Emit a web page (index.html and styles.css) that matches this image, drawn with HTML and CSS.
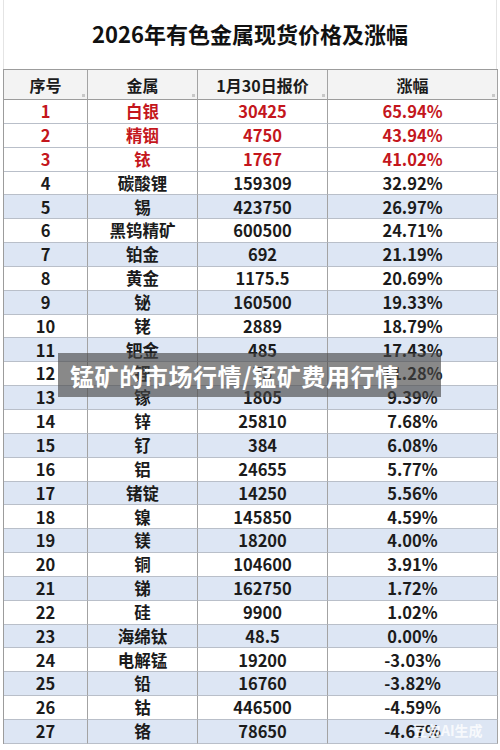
FILE: index.html
```html
<!DOCTYPE html>
<html lang="zh-CN">
<head>
<meta charset="utf-8">
<title>2026年有色金属现货价格及涨幅</title>
<link rel="stylesheet" href="styles.css">
</head>
<body>
<div class="page">
  <h1 class="title">2026年有色金属现货价格及涨幅</h1>
  <div class="sheet">
    <div class="row head"><div class="c">序号</div><div class="c">金属</div><div class="c">1月30日报价</div><div class="c">涨幅</div></div>
    <div class="row red"><div class="c">1</div><div class="c">白银</div><div class="c">30425</div><div class="c">65.94%</div></div>
    <div class="row red"><div class="c">2</div><div class="c">精铟</div><div class="c">4750</div><div class="c">43.94%</div></div>
    <div class="row red"><div class="c">3</div><div class="c">铱</div><div class="c">1767</div><div class="c">41.02%</div></div>
    <div class="row"><div class="c">4</div><div class="c">碳酸锂</div><div class="c">159309</div><div class="c">32.92%</div></div>
    <div class="row alt"><div class="c">5</div><div class="c">锡</div><div class="c">423750</div><div class="c">26.97%</div></div>
    <div class="row"><div class="c">6</div><div class="c">黑钨精矿</div><div class="c">600500</div><div class="c">24.71%</div></div>
    <div class="row alt"><div class="c">7</div><div class="c">铂金</div><div class="c">692</div><div class="c">21.19%</div></div>
    <div class="row"><div class="c">8</div><div class="c">黄金</div><div class="c">1175.5</div><div class="c">20.69%</div></div>
    <div class="row alt"><div class="c">9</div><div class="c">铋</div><div class="c">160500</div><div class="c">19.33%</div></div>
    <div class="row"><div class="c">10</div><div class="c">铑</div><div class="c">2889</div><div class="c">18.79%</div></div>
    <div class="row alt"><div class="c">11</div><div class="c">钯金</div><div class="c">485</div><div class="c">17.43%</div></div>
    <div class="row"><div class="c">12</div><div class="c">锂</div><div class="c">75</div><div class="c">11.28%</div></div>
    <div class="row alt"><div class="c">13</div><div class="c">镓</div><div class="c">1805</div><div class="c">9.39%</div></div>
    <div class="row"><div class="c">14</div><div class="c">锌</div><div class="c">25810</div><div class="c">7.68%</div></div>
    <div class="row alt"><div class="c">15</div><div class="c">钌</div><div class="c">384</div><div class="c">6.08%</div></div>
    <div class="row"><div class="c">16</div><div class="c">铝</div><div class="c">24655</div><div class="c">5.77%</div></div>
    <div class="row alt"><div class="c">17</div><div class="c">锗锭</div><div class="c">14250</div><div class="c">5.56%</div></div>
    <div class="row"><div class="c">18</div><div class="c">镍</div><div class="c">145850</div><div class="c">4.59%</div></div>
    <div class="row alt"><div class="c">19</div><div class="c">镁</div><div class="c">18200</div><div class="c">4.00%</div></div>
    <div class="row"><div class="c">20</div><div class="c">铜</div><div class="c">104600</div><div class="c">3.91%</div></div>
    <div class="row alt"><div class="c">21</div><div class="c">锑</div><div class="c">162750</div><div class="c">1.72%</div></div>
    <div class="row"><div class="c">22</div><div class="c">硅</div><div class="c">9900</div><div class="c">1.02%</div></div>
    <div class="row alt"><div class="c">23</div><div class="c">海绵钛</div><div class="c">48.5</div><div class="c">0.00%</div></div>
    <div class="row"><div class="c">24</div><div class="c">电解锰</div><div class="c">19200</div><div class="c">-3.03%</div></div>
    <div class="row alt"><div class="c">25</div><div class="c">铅</div><div class="c">16760</div><div class="c">-3.82%</div></div>
    <div class="row"><div class="c">26</div><div class="c">钴</div><div class="c">446500</div><div class="c">-4.59%</div></div>
    <div class="row alt"><div class="c">27</div><div class="c">铬</div><div class="c">78650</div><div class="c">-4.67%</div></div>
  </div>
  <div class="caption">锰矿的市场行情/锰矿费用行情</div>
  <div class="watermark">豆包AI生成</div>
</div>
</body>
</html>
```
FILE: styles.css
```css
html, body {
  margin: 0;
  padding: 0;
  background: #ffffff;
}
.page {
  position: relative;
  width: 500px;
  height: 750px;
  overflow: hidden;
  font-family: "Noto Sans CJK SC", "Noto Sans", sans-serif;
  color: #1b1b1b;
  background: #ffffff;
}
.title {
  margin: 0;
  height: 69px;
  display: flex;
  align-items: center;
  justify-content: center;
  font-size: 22px;
  font-weight: 700;
  color: #111;
  padding-bottom: 4px;
  box-sizing: border-box;
  border-left: 1px solid #e4e4e4;
  border-right: 1px solid #e4e4e4;
  margin-left: 3px;
  width: 494px;
}
.sheet {
  margin-left: 3px;
  width: 495px;
  border-top: 1px solid #9c9c9c;
  border-left: 1px solid #9c9c9c;
  box-sizing: border-box;
}
.row {
  display: grid;
  grid-template-columns: 84px 110px 130px 170px;
  height: 23.85px;
  background: #ffffff;
}
.row.alt {
  background: #dde6f4;
}
.row.head {
  height: 30px;
  background: #f3f3f3;
}
.c {
  position: relative;
  display: flex;
  align-items: center;
  justify-content: center;
  border-right: 1px solid #a3a3a3;
  border-bottom: 1px solid #b9bfc9;
  box-sizing: border-box;
  font-size: 16.5px;
  font-weight: 700;
  line-height: 1;
}
.head .c {
  font-size: 16px;
  font-weight: 700;
  border-bottom-color: #9c9c9c;
}
.head .c::after {
  content: "";
  position: absolute;
  right: 2px;
  bottom: 2px;
  width: 3px;
  height: 3px;
  background: #c8c8c8;
}
.red .c {
  color: #c4161c;
}
.caption {
  position: absolute;
  left: 58px;
  top: 353px;
  width: 383px;
  height: 44px;
  box-sizing: border-box;
  padding-left: 12px;
  display: flex;
  align-items: center;
  background: rgba(70, 70, 70, 0.64);
  color: #ffffff;
  font-size: 24px;
  font-weight: 700;
  letter-spacing: 0.6px;
}
.watermark {
  position: absolute;
  left: 413px;
  top: 720px;
  font-size: 14px;
  font-weight: 700;
  color: rgba(255, 255, 255, 0.8);
}
```
